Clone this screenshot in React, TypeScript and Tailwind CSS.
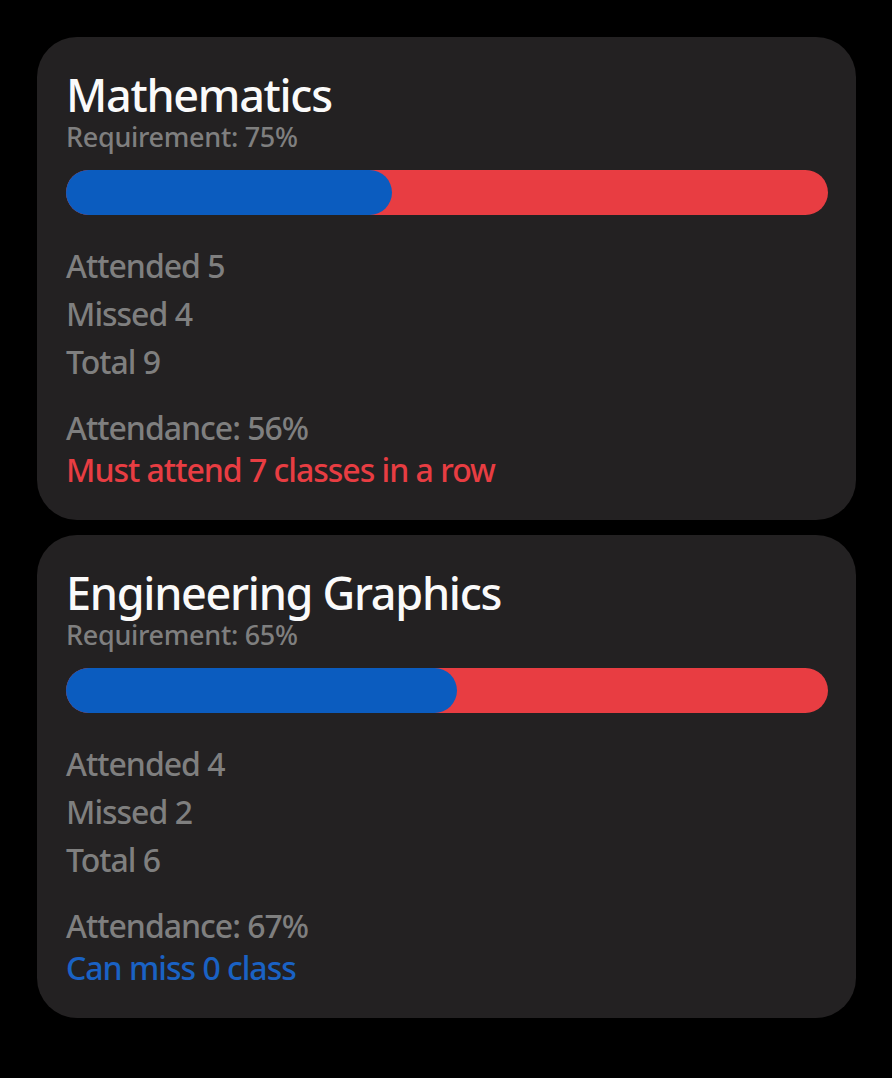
const subjects = [
  {
    name: "Mathematics",
    requirement: 75,
    attended: 5,
    missed: 4,
    total: 9,
    attendance: 56,
    bar: 326,
    note: "Must attend 7 classes in a row",
    ok: false,
  },
  {
    name: "Engineering Graphics",
    requirement: 65,
    attended: 4,
    missed: 2,
    total: 6,
    attendance: 67,
    bar: 391,
    note: "Can miss 0 class",
    ok: true,
  },
];

function SubjectCard({ s }: { s: (typeof subjects)[number] }) {
  return (
    <div className="w-[819px] rounded-[40px] bg-[#232122] px-[29px] pt-[34px] pb-[29px] font-medium">
      <div className="text-[45px] leading-[48px] text-[#fafafa] tracking-[-1.3px]">{s.name}</div>
      <div className="mt-[3px] text-[27px] leading-[30px] text-[#7f7f7f] tracking-[-0.3px]">
        Requirement: {s.requirement}%
      </div>
      <div className="mt-[18px] h-[45px] w-[762px] rounded-full bg-[#e83d42]">
        <div className="h-full rounded-full bg-[#0b5cbf]" style={{ width: s.bar }} />
      </div>
      <div className="mt-[27px] text-[32px] leading-[48px] text-[#7f7f7f] tracking-[-1px]">
        <div>Attended {s.attended}</div>
        <div>Missed {s.missed}</div>
        <div>Total {s.total}</div>
      </div>
      <div className="mt-[21px] text-[32px] leading-[42px] tracking-[-1px]">
        <div className="text-[#7f7f7f]">Attendance: {s.attendance}%</div>
        <div className={s.ok ? "text-[#1a62c4]" : "text-[#e83d42]"}>{s.note}</div>
      </div>
    </div>
  );
}

export default function App() {
  return (
    <div
      className="min-h-[1078px] w-[892px] bg-black pt-[37px] pl-[37px] flex flex-col gap-[15px]"
      style={{ fontFamily: '"Noto Sans", "Open Sans", sans-serif' }}
    >
      {subjects.map((s) => (
        <SubjectCard key={s.name} s={s} />
      ))}
    </div>
  );
}
